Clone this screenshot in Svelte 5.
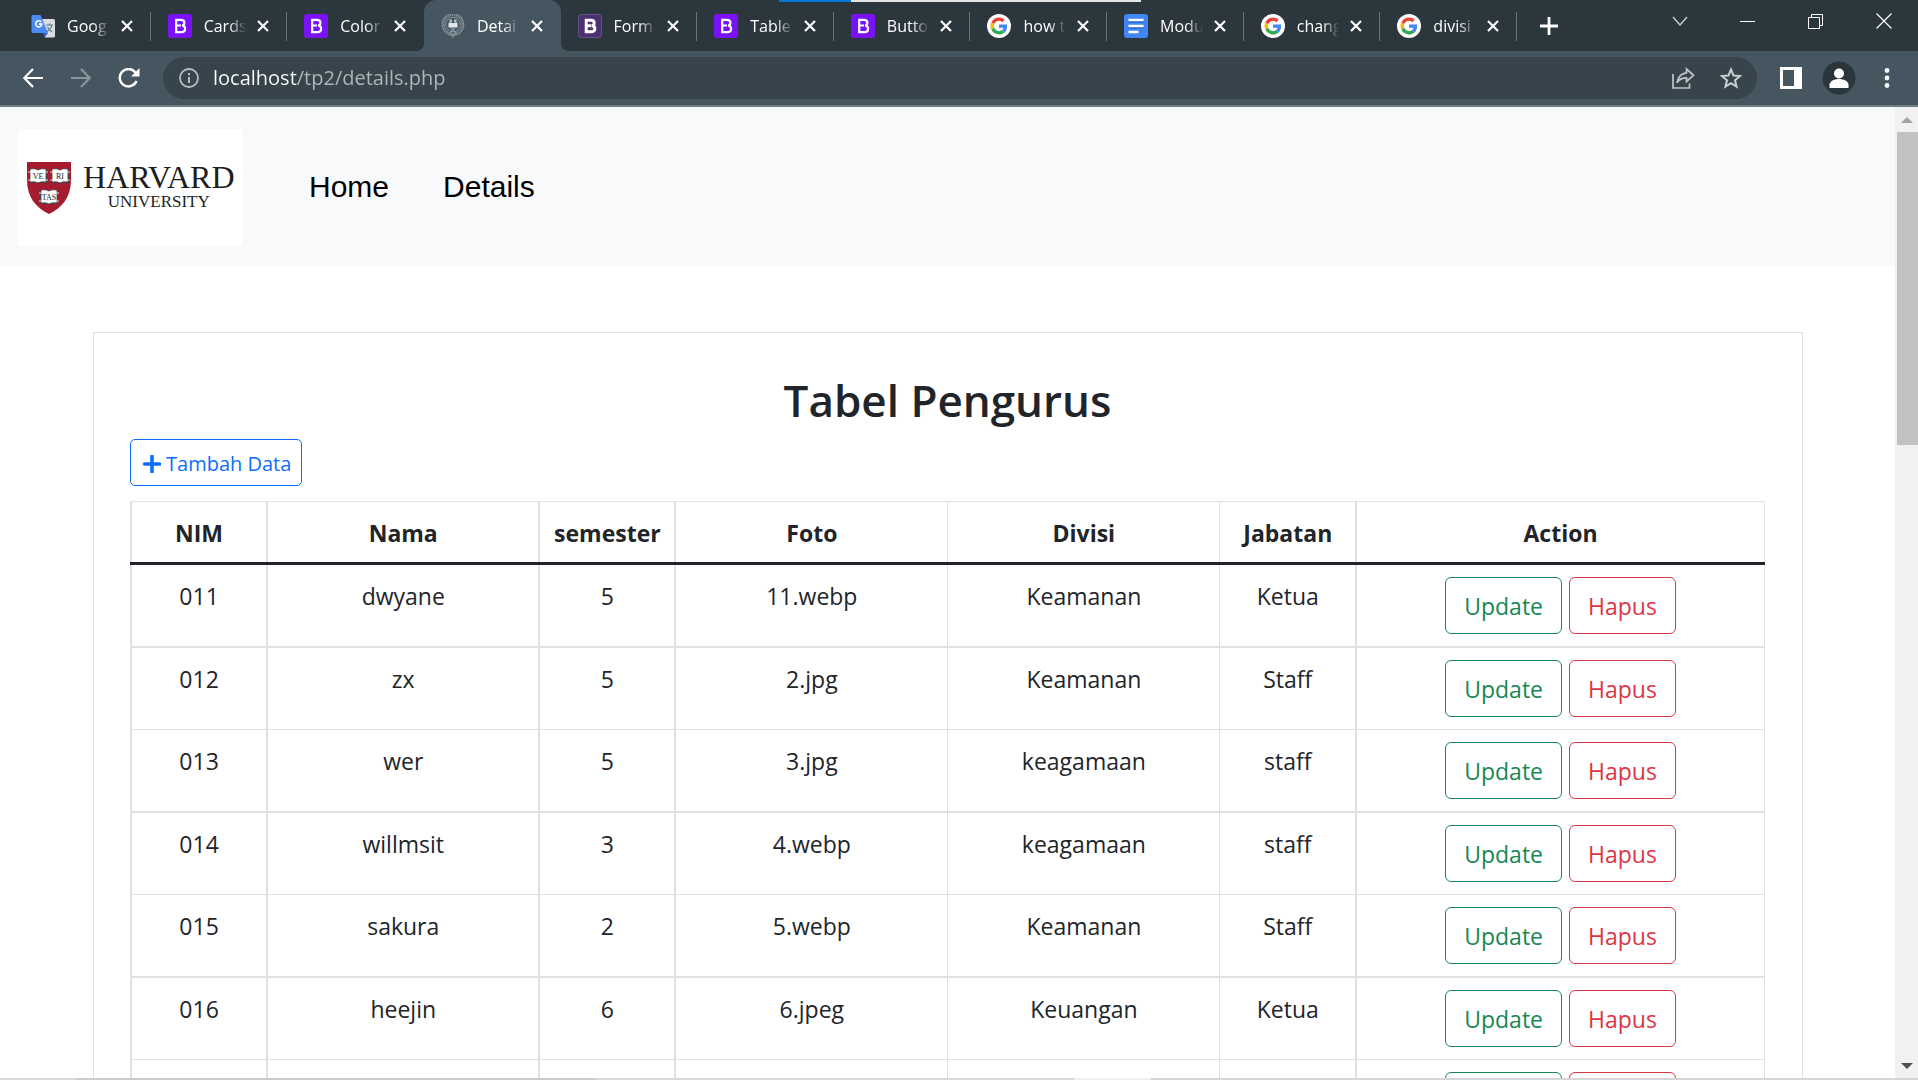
<script>
  const tabs = [
    { title: 'Goog', icon: 'translate' },
    { title: 'Cards', icon: 'bootstrap' },
    { title: 'Color', icon: 'bootstrap' },
    { title: 'Detai', icon: 'crest', active: true },
    { title: 'Form', icon: 'bootstrap-old' },
    { title: 'Table', icon: 'bootstrap' },
    { title: 'Butto', icon: 'bootstrap' },
    { title: 'how t', icon: 'google' },
    { title: 'Modu', icon: 'docs' },
    { title: 'chang', icon: 'google' },
    { title: 'divisi', icon: 'google' }
  ];

  const columns = ['NIM', 'Nama', 'semester', 'Foto', 'Divisi', 'Jabatan', 'Action'];

  const rows = [
    ['011', 'dwyane', '5', '11.webp', 'Keamanan', 'Ketua'],
    ['012', 'zx', '5', '2.jpg', 'Keamanan', 'Staff'],
    ['013', 'wer', '5', '3.jpg', 'keagamaan', 'staff'],
    ['014', 'willmsit', '3', '4.webp', 'keagamaan', 'staff'],
    ['015', 'sakura', '2', '5.webp', 'Keamanan', 'Staff'],
    ['016', 'heejin', '6', '6.jpeg', 'Keuangan', 'Ketua'],
    ['', '', '', '', '', '']
  ];
</script>

{#snippet favicon(kind)}
  <svg class="favicon" viewBox="0 0 24 24" aria-hidden="true">
    {#if kind === 'translate'}
      <path d="M11 5h11.500a1.500 1.500 0 0 1 1.500 1.500V22a1.500 1.500 0 0 1-1.500 1.500H14z" fill="#dadce0" />
      <path d="M12 19h5l-3.500 4.500z" fill="#3a5bc7" />
      <path d="M2 1h7.500l7.500 18H2a1.500 1.500 0 0 1-1.500-1.500v-15A1.500 1.500 0 0 1 2 1z" fill="#4c8bf5" />
      <path d="M10.300 8.200A3 3 0 1 0 10.800 10H7.900" fill="none" stroke="#fff" stroke-width="1.500" />
      <path d="M15 11h7M18.500 9.500V11M21 11c-.6 3-2.500 5-5 6.500M16.500 13c1 2 2.500 3.500 4.500 4.800" fill="none" stroke="#607d8b" stroke-width="1.200" />
    {:else if kind === 'bootstrap'}
      <rect width="24" height="24" rx="3" fill="#7a12f8" />
      <path d="M8.200 5.800h4.700c2.200 0 3.500 1.100 3.500 2.900 0 1.400-.9 2.500-2.300 2.800 1.800.2 3 1.400 3 3.200 0 2.200-1.600 3.500-4.200 3.500H8.200zM8.200 11.500h4.800" fill="none" stroke="#fff" stroke-width="2.200" />
    {:else if kind === 'bootstrap-old'}
      <rect x=".5" y=".5" width="23" height="23" rx="3" fill="#4c3170" stroke="#6a5487" />
      <path d="M8.200 6.300h4.700c2.200 0 3.300 1 3.300 2.600 0 1.400-.9 2.500-2.300 2.800 1.800.2 3 1.200 3 2.800 0 2.200-1.600 3.300-4.200 3.300H8.200zM8.700 11.800h4.500" fill="none" stroke="#fff" stroke-width="2.900" />
    {:else if kind === 'google'}
      <circle cx="12" cy="12" r="12" fill="#fff" />
      <g transform="translate(3.500 3.500) scale(.354)">
        <path fill="#ea4335" d="M24 9.500c3.540 0 6.710 1.220 9.210 3.600l6.850-6.850C35.900 2.380 30.470 0 24 0 14.620 0 6.510 5.380 2.560 13.220l7.980 6.190C12.430 13.720 17.740 9.500 24 9.500z" />
        <path fill="#4285f4" d="M46.980 24.550c0-1.570-.15-3.090-.38-4.550H24v9.020h12.940c-.58 2.960-2.260 5.480-4.780 7.180l7.730 6c4.510-4.180 7.090-10.360 7.090-17.650z" />
        <path fill="#fbbc05" d="M10.530 28.590c-.48-1.450-.76-2.990-.76-4.590s.27-3.140.76-4.590l-7.980-6.190C.92 16.460 0 20.120 0 24s.92 7.540 2.560 10.780z" />
        <path fill="#34a853" d="M24 48c6.480 0 11.930-2.130 15.890-5.810l-7.730-6c-2.150 1.450-4.920 2.300-8.160 2.300-6.260 0-11.570-4.220-13.470-9.910l-7.980 6.190C6.510 42.620 14.620 48 24 48z" />
      </g>
    {:else if kind === 'docs'}
      <rect width="24" height="24" rx="3" fill="#4285f4" />
      <path d="M4.500 6h15M4.500 12h15M4.500 18h10" stroke="#fff" stroke-width="2.400" />
      <path d="M4.500 8h15M4.500 14h15" stroke="#2a63c4" stroke-width="1" />
    {:else}
      <g fill="none" stroke="#87959c">
        <circle cx="12" cy="10.500" r="10.800" stroke-width="1.200" stroke-dasharray="2.400 .4" />
        <circle cx="12" cy="10.500" r="9.200" stroke-width="1.600" stroke-dasharray="1.200 .8" />
        <circle cx="12" cy="10.500" r="7.300" stroke-width="1" />
        <path d="M9.500 19a2.500 2.300 0 1 0 5 0a2.500 2.300 0 1 0-5 0M12 21.500V24" stroke-width="1.200" />
      </g>
      <path d="M7.500 9c1.800-.6 3.300-.5 4.500.3 1.200-.8 2.700-.9 4.500-.3v4.500h-9z" fill="#e3e8ea" />
      <path d="M8.500 5.500h2.500V8H8.500zM13 5.500h2.500V8H13z" fill="#b4bec3" />
      <path d="M9 14.200h6l-3 2.300z" fill="#87959c" />
    {/if}
  </svg>
{/snippet}

<div class="window">
  <header class="strip">
    <nav class="tabs" aria-label="Tabs">
      {#each tabs as tab}
        <div class="tab" class:active={tab.active}>
          {@render favicon(tab.icon)}
          <span class="title">{tab.title}</span>
          <button class="plain close" aria-label="Close tab">
            <svg width="12" height="12" viewBox="0 0 12 12"><path d="M1 1l10 10M11 1L1 11" stroke="#fff" stroke-width="2.200" /></svg>
          </button>
        </div>
      {/each}
    </nav>
    <button class="plain new-tab" aria-label="New tab">
      <svg width="18" height="18" viewBox="0 0 18 18"><path d="M9 0v18M0 9h18" stroke="#fff" stroke-width="2.800" /></svg>
    </button>
    <div class="controls">
      <button class="plain" aria-label="Search tabs">
        <svg width="16" height="16" viewBox="0 0 16 16"><path d="M1 4l7 8 7-8" fill="none" stroke="#ccd1d4" stroke-width="1.300" /></svg>
      </button>
      <button class="plain" aria-label="Minimize">
        <svg width="16" height="16" viewBox="0 0 16 16"><path d="M0 8.500h15" stroke="#fff" /></svg>
      </button>
      <button class="plain" aria-label="Restore">
        <svg width="16" height="16" viewBox="0 0 16 16"><path d="M.5 4.500h11v11H.5zM3.500 4.500v-3h11v11h-3" fill="none" stroke="#fff" /></svg>
      </button>
      <button class="plain" aria-label="Close">
        <svg width="16" height="16" viewBox="0 0 16 16"><path d="M.5 .5l15 15M15.500 .5l-15 15" stroke="#fff" stroke-width="1.200" /></svg>
      </button>
    </div>
    <div class="peek"></div>
  </header>

  <div class="toolbar">
    <button class="plain tool" aria-label="Back">
      <svg width="20" height="20" viewBox="0 0 20 20"><path d="M20 10H1.500M10 1L1.300 10l8.700 9" fill="none" stroke="#fff" stroke-width="2.200" /></svg>
    </button>
    <button class="plain tool" aria-label="Forward">
      <svg width="20" height="20" viewBox="0 0 20 20"><path d="M0 10h18.500M10 1l8.700 9-8.700 9" fill="none" stroke="#8a969c" stroke-width="2.200" /></svg>
    </button>
    <button class="plain tool" aria-label="Reload">
      <svg width="22" height="20" viewBox="0 0 22 20"><path d="M18.500 13A8.700 8.700 0 1 1 17 4l2 2.500" fill="none" stroke="#fff" stroke-width="2.400" /><path d="M21.500 0v8.500H13z" fill="#fff" /></svg>
    </button>
    <div class="omnibox">
      <svg width="20" height="20" viewBox="0 0 20 20" aria-hidden="true"><circle cx="10" cy="10" r="9" fill="none" stroke="#b5bcc0" stroke-width="1.800" /><path d="M10 9v6M10 5v2.200" stroke="#b5bcc0" stroke-width="2" /></svg>
      <input aria-label="Address" value="localhost/tp2/details.php" spellcheck="false" />
      <button class="plain tool" aria-label="Share">
        <svg width="24" height="22" viewBox="0 0 24 22"><g fill="none" stroke="#bfc5c8" stroke-width="1.700"><path d="M2 7v14h16.500v-4.500" /><path d="M15.500 2l7 6.300-7 6.200v-3.700c-4.500 0-7.500 1.500-9.500 5 .8-5.500 4-9.300 9.500-10z" /></g></svg>
      </button>
      <button class="plain tool" aria-label="Bookmark">
        <svg width="22" height="22" viewBox="0 0 22 22"><path d="M11 2.500l2.500 6 6.500.6-5 4.200 1.600 6.400L11 16.200l-5.600 3.500L7 13.300 2 9.100l6.500-.6z" fill="none" stroke="#c9ced0" stroke-width="2" /></svg>
      </button>
    </div>
    <div class="actions">
      <button class="plain tool" aria-label="Side panel">
        <svg width="22" height="22" viewBox="0 0 22 22"><path d="M0 0h22v22H0zM3 3v16h11V3z" fill="#fff" fill-rule="evenodd" /></svg>
      </button>
      <button class="plain tool" aria-label="Profile">
        <svg width="34" height="34" viewBox="0 0 34 34"><circle cx="17" cy="17" r="16.500" fill="#2b363c" /><circle cx="17" cy="12.500" r="5" fill="#fff" /><path d="M7.500 27v-3c0-4 5-6 9.500-6s9.500 2 9.500 6v3z" fill="#fff" /></svg>
      </button>
      <button class="plain tool" aria-label="Menu">
        <svg width="6" height="20" viewBox="0 0 6 20"><g fill="#fff"><circle cx="3" cy="2.500" r="2.400" /><circle cx="3" cy="10" r="2.400" /><circle cx="3" cy="17.500" r="2.400" /></g></svg>
      </button>
    </div>
  </div>

  <div class="viewport">
    <div class="page">
      <nav class="navbar" aria-label="Main">
        <a class="brand" href="#home">
          <svg width="44" height="52" viewBox="0 0 44 52" aria-hidden="true">
            <path d="M0 0h44v18c0 17-9 28-22 34C9 46 0 35 0 18z" fill="#a51c30" />
            {#each [[11, 14, 'VE'], [33, 14, 'RI'], [22, 35, 'TAS']] as [x, y, word]}
              <g>
                <path d="M{x - 9} {y - 6}h18v13h-18z" fill="#55494b" />
                <path d="M{x - 8} {y - 7}q5-1 8 1q3-2 8-1v13q-5-1-8 1q-3-2-8-1z" fill="#fff" stroke="#333" stroke-width=".7" />
                <path d="M{x - 10} {y - 4}h3M{x - 10} {y + 4}h3M{x + 7} {y - 4}h3M{x + 7} {y + 4}h3" stroke="#ddd" stroke-width="1" />
                <text {x} y={y + 3} class="motto">{word}</text>
              </g>
            {/each}
          </svg>
          <span class="wordmark">
            <span class="harvard">HARVARD</span>
            <span class="university">UNIVERSITY</span>
          </span>
        </a>
        <div class="links">
          <a href="#home">Home</a>
          <a href="#details">Details</a>
        </div>
      </nav>

      <main class="card">
        <h1>Tabel Pengurus</h1>
        <button class="btn add">
          <svg width="20" height="18" viewBox="0 0 20 18" aria-hidden="true"><path d="M11 1.500v15M3.500 9h15" stroke="currentColor" stroke-width="3.600" stroke-linecap="round" /></svg>
          Tambah Data
        </button>
        <table>
          <colgroup>
            <col class="narrow" /><col class="medium" /><col class="narrow" /><col class="medium" />
            <col class="medium" /><col class="narrow" /><col class="wide" />
          </colgroup>
          <thead>
            <tr>
              {#each columns as column}<th scope="col">{column}</th>{/each}
            </tr>
          </thead>
          <tbody>
            {#each rows as row}
              <tr>
                {#each row as cell}<td>{cell}</td>{/each}
                <td>
                  <div class="row-actions">
                    <button class="btn update">Update</button>
                    <button class="btn delete">Hapus</button>
                  </div>
                </td>
              </tr>
            {/each}
          </tbody>
        </table>
      </main>
    </div>
    <div class="scrollbar" aria-hidden="true">
      <svg width="12" height="6" viewBox="0 0 12 6"><path d="M0 6l6-6 6 6z" fill="#a3a3a3" /></svg>
      <div class="track"><div class="thumb"></div></div>
      <svg width="12" height="6" viewBox="0 0 12 6"><path d="M0 0h12L6 6z" fill="#505050" /></svg>
    </div>
  </div>
  <div class="edge"></div>
</div>

<style>
  :global(body) {
    margin: 0;
    overflow: hidden;
  }
  .window {
    height: 100vh;
    display: flex;
    flex-direction: column;
    overflow: hidden;
    background: #fff;
    color: #212529;
    font-family: 'Open Sans', 'Noto Sans', sans-serif;
  }
  .window :global(*) {
    box-sizing: border-box;
  }
  svg {
    display: block;
    flex: none;
  }
  .plain {
    display: flex;
    align-items: center;
    justify-content: center;
    padding: 0;
    border: 0;
    background: none;
  }

  /* Tab strip */
  .strip {
    position: relative;
    flex: none;
    display: flex;
    height: 51px;
    padding-left: 14px;
    background: #2c373d;
  }
  .tabs {
    flex: 0 1 1503px;
    display: grid;
    grid-template-columns: repeat(11, minmax(0, 1fr));
  }
  .tab {
    position: relative;
    display: flex;
    align-items: center;
    padding: 0 18px 0 17px;
    color: #fff;
    font-size: 16px;
  }
  .tab::after {
    content: '';
    position: absolute;
    right: 0;
    top: 12px;
    width: 1px;
    height: 29px;
    background: #66737a;
  }
  .tab:has(+ .active)::after {
    display: none;
  }
  .favicon {
    width: 24px;
    height: 24px;
  }
  .title {
    flex: 1;
    margin: 0 11px 0 12px;
    overflow: hidden;
    white-space: nowrap;
    line-height: 24px;
    mask-image: linear-gradient(to right, #000 60%, transparent);
  }
  .active {
    border-radius: 12px 12px 0 0;
    background: #455660;
  }
  .active::before,
  .active::after {
    content: '';
    position: absolute;
    top: auto;
    bottom: 0;
    width: 8px;
    height: 8px;
  }
  .active::before {
    left: -8px;
    background: radial-gradient(circle at 0 0, transparent 8px, #455660 8px);
  }
  .active::after {
    right: -8px;
    background: radial-gradient(circle at 100% 0, transparent 8px, #455660 8px);
  }
  .new-tab {
    width: 64px;
  }
  .controls {
    display: flex;
    height: 42px;
    margin-left: auto;
  }
  .controls .plain {
    width: 68px;
  }
  .peek {
    position: absolute;
    top: 0;
    left: 779px;
    width: 362px;
    height: 2px;
    background: linear-gradient(to right, #0078d7 72px, #e5e5e5 72px);
  }

  /* Toolbar */
  .toolbar {
    flex: none;
    display: flex;
    align-items: center;
    height: 56px;
    padding: 0 7px 0 9px;
    border-bottom: 2px solid #6f7d85;
    background: #455660;
  }
  .tool {
    flex: none;
    width: 48px;
    height: 42px;
  }
  .omnibox {
    flex: 1;
    display: flex;
    align-items: center;
    height: 42px;
    margin-left: 10px;
    padding: 0 2px 0 16px;
    border-radius: 21px;
    background: #38444b;
  }
  .omnibox input {
    flex: 1;
    min-width: 0;
    margin-left: 14px;
    padding: 0;
    border: 0;
    outline: 0;
    font: 20px/30px 'Open Sans', 'Noto Sans', sans-serif;
    color: transparent;
    background: linear-gradient(to right, #fff 84px, #b0b7bb 84px);
    background-clip: text;
  }
  .actions {
    display: flex;
    margin-left: 10px;
  }

  /* Page */
  .viewport {
    flex: 1;
    min-height: 0;
    display: flex;
  }
  .page {
    flex: 1;
    min-width: 0;
    overflow: hidden;
  }
  .navbar {
    display: flex;
    align-items: center;
    padding: 22px 18px 20px;
    background: #f8f9fb;
  }
  .brand {
    display: flex;
    align-items: center;
    gap: 12px;
    width: 225px;
    height: 117px;
    padding-left: 9px;
    background: #fff;
    color: #1e1e1e;
    text-decoration: none;
    font-family: 'Liberation Serif', serif;
  }
  .motto {
    font-size: 8px;
    text-anchor: middle;
    fill: #222;
  }
  .wordmark {
    display: flex;
    flex-direction: column;
    align-items: center;
    padding-bottom: 4px;
  }
  .harvard {
    font-size: 32px;
    line-height: 32px;
  }
  .university {
    font-size: 17px;
    line-height: 18px;
  }
  .links {
    display: flex;
    gap: 54px;
    margin-left: 66px;
    padding-bottom: 2px;
    font: 30px/44px 'Liberation Sans', sans-serif;
  }
  .links a {
    color: #000;
    text-decoration: none;
  }

  .card {
    margin: 66px 92px 0 93px;
    padding: 36px 37px 36px 36px;
    border: 1px solid #dee2e6;
  }
  h1 {
    margin: 0;
    padding: 2px 0 10px;
    text-align: center;
    font-size: 44px;
    line-height: 58px;
    font-weight: 600;
  }
  .btn {
    padding: 10px 18px 8px;
    border: 1px solid currentColor;
    border-radius: 6px;
    background: #fff;
    font: 23px/37px 'Open Sans', 'Noto Sans', sans-serif;
  }
  .add {
    display: flex;
    align-items: center;
    gap: 5px;
    margin-bottom: 15px;
    padding: 8px 10px 6px;
    border-radius: 5px;
    color: #0d6efd;
    font-size: 20px;
    line-height: 31px;
  }
  .update {
    color: #198754;
  }
  .delete {
    color: #dc3545;
  }
  table {
    width: 100%;
    table-layout: fixed;
    border-collapse: collapse;
    border-top: 1px solid #dee2e6;
    border-left: 2px solid #dee2e6;
    text-align: center;
    font-size: 23px;
    line-height: 38px;
  }
  .narrow {
    width: 8.333%;
  }
  .medium {
    width: 16.667%;
  }
  .wide {
    width: 25%;
  }
  th,
  td {
    padding: 12px 0;
    border-right: 1px solid #dee2e6;
    vertical-align: top;
  }
  th:nth-child(-n + 3),
  td:nth-child(-n + 3),
  th:nth-child(6),
  td:nth-child(6) {
    border-right-width: 2px;
  }
  th {
    padding: 12px 0 10px;
    border-bottom: 3px solid #212529;
    font-weight: 700;
  }
  td {
    border-bottom: 1px solid #dee2e6;
  }
  tbody tr:nth-child(odd) td {
    border-bottom-width: 2px;
  }
  .row-actions {
    display: flex;
    justify-content: center;
    gap: 7px;
  }

  .scrollbar {
    flex: none;
    display: flex;
    flex-direction: column;
    align-items: center;
    gap: 9px;
    width: 23px;
    padding: 10px 0 9px;
    background: #f1f1f1;
  }
  .track {
    flex: 1;
    align-self: stretch;
    padding-left: 2px;
  }
  .thumb {
    height: 34%;
    background: #c1c1c1;
  }
  .edge {
    flex: none;
    height: 2px;
    background: linear-gradient(
      to right,
      #d9d9d9 4%,
      #cbcbcb 4% 31%,
      #d9d9d9 31% 56%,
      #efefef 56% 60%,
      #d6d6d6 60%
    );
  }
</style>
